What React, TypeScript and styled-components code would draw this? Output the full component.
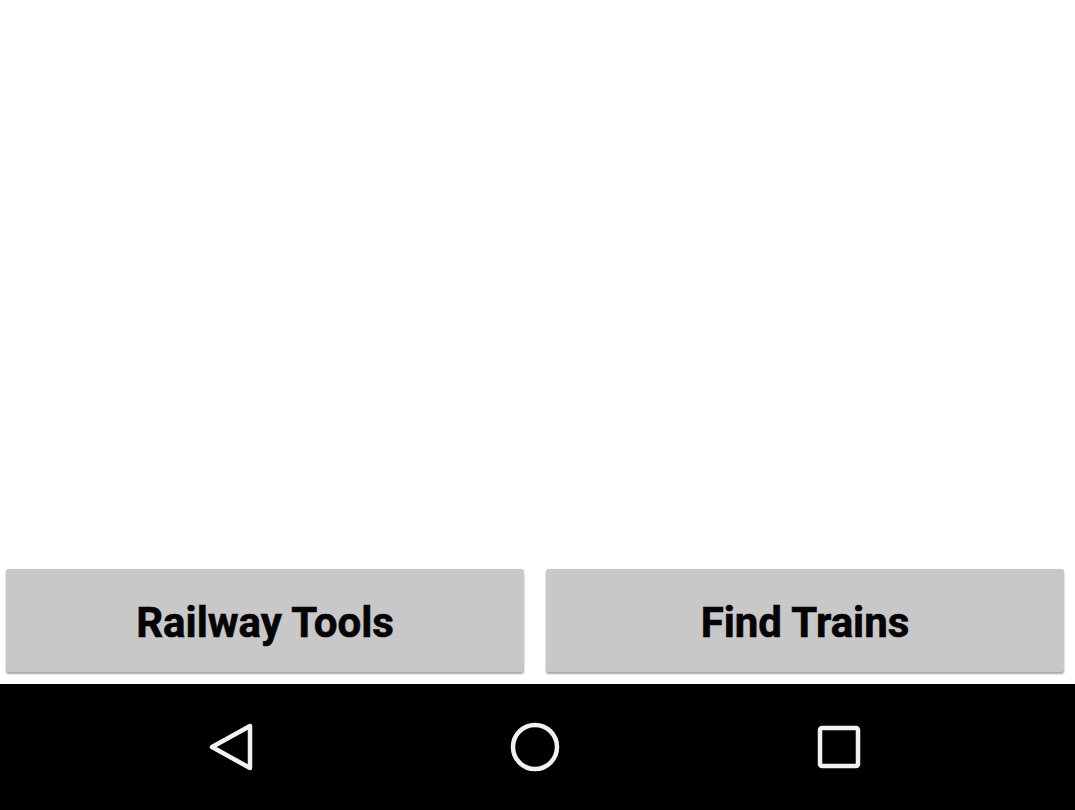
import React from "react";
import styled, { createGlobalStyle } from "styled-components";

const Global = createGlobalStyle`
  html, body { margin: 0; padding: 0; background: #ffffff; }
  #root { height: 810px; }
`;

const Screen = styled.div`
  width: 1075px;
  height: 810px;
  display: flex;
  flex-direction: column;
  background: #ffffff;
`;

const Content = styled.div`
  flex: 1;
`;

const ButtonRow = styled.div`
  display: flex;
  gap: 22px;
  padding: 0 11px 12px 6px;
`;

const ActionButton = styled.button`
  flex: 1;
  height: 103px;
  border: none;
  border-radius: 3px;
  background: #c8c8c8;
  box-shadow: 0 2px 2px rgba(0, 0, 0, 0.35), 0 0 1px rgba(0, 0, 0, 0.15);
  font-family: Roboto, "Liberation Sans", sans-serif;
  font-weight: 700;
  font-size: 42px;
  color: #050505;
  -webkit-text-stroke: 0.6px #050505;
  padding: 0;
  padding-top: 3px;
`;

const NavBar = styled.div`
  height: 126px;
  background: #000000;
  display: flex;
  align-items: center;
  justify-content: center;
  gap: 244px;
  padding-right: 5px;
`;

const NavIcon = styled.svg`
  width: 60px;
  height: 60px;
  flex: none;
`;

export default function App() {
  return (
    <>
      <Global />
      <Screen>
        <Content />
        <ButtonRow>
          <ActionButton>Railway Tools</ActionButton>
          <ActionButton>Find Trains</ActionButton>
        </ButtonRow>
        <NavBar>
          <NavIcon viewBox="0 0 60 60">
            <path
              d="M49 9 L49 51 L11 30 Z"
              fill="none"
              stroke="#f2f2f2"
              strokeWidth="4.5"
              strokeLinejoin="round"
            />
          </NavIcon>
          <NavIcon viewBox="0 0 60 60">
            <circle cx="30" cy="30" r="22" fill="none" stroke="#f2f2f2" strokeWidth="4.5" />
          </NavIcon>
          <NavIcon viewBox="0 0 60 60">
            <rect x="11" y="11" width="38" height="38" rx="2" fill="none" stroke="#f2f2f2" strokeWidth="4.5" />
          </NavIcon>
        </NavBar>
      </Screen>
    </>
  );
}
